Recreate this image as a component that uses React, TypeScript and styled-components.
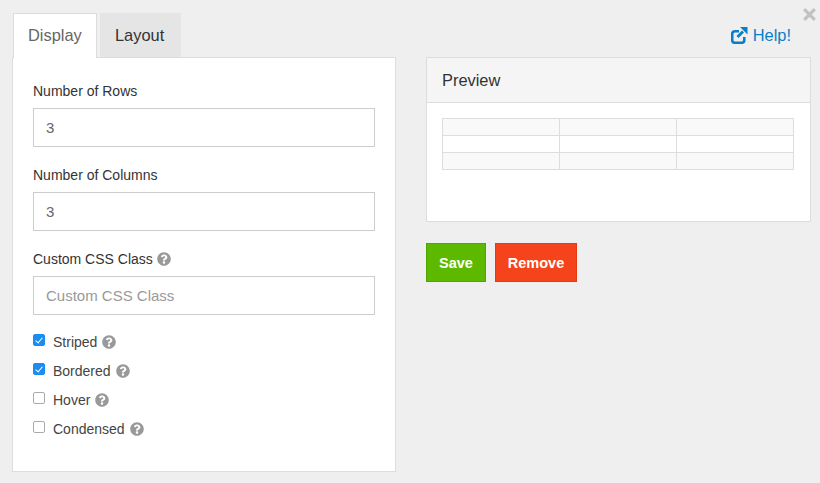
import * as React from 'react';
import styled, {createGlobalStyle} from 'styled-components';
import {FaQuestionCircle} from 'react-icons/fa';

const GlobalStyle = createGlobalStyle`
    html, body {
        margin: 0;
        background: #efefef;
    }

    body {
        font-family: "Liberation Sans", Arial, sans-serif;
        font-size: 14px;
        color: #333;
    }
`;

const Page = styled.div`
    position: relative;
    box-sizing: border-box;
    width: 820px;
    height: 483px;
    padding: 13px 9px 0 12px;
    display: grid;
    grid-template-columns: 384px 385px;
    column-gap: 30px;
    overflow: hidden;
`;

const CloseButton = styled.svg`
    position: absolute;
    top: 8px;
    right: 4px;
    width: 13px;
    height: 13px;
`;

const Tabs = styled.div`
    display: flex;
    gap: 3px;
    margin-left: 1px;
    height: 44px;
`;

const Tab = styled.div<{$active?: boolean}>`
    box-sizing: border-box;
    width: ${p => (p.$active ? '84px' : '81px')};
    height: ${p => (p.$active ? '45px' : '44px')};
    padding-left: ${p => (p.$active ? '14px' : '15px')};
    font-size: 16.4px;
    line-height: ${p => (p.$active ? '43px' : '45px')};
    position: relative;
    z-index: 1;
    color: ${p => (p.$active ? '#666' : '#333')};
    background: ${p => (p.$active ? '#fff' : '#e5e5e5')};
    border: ${p => (p.$active ? '1px solid #ddd' : 'none')};
    border-bottom: none;
`;

const FormPanel = styled.div`
    box-sizing: border-box;
    height: 415px;
    padding: 24px 20px 0;
    background: #fff;
    border: 1px solid #ddd;
`;

const Field = styled.div`
    margin-bottom: 19px;
`;

const FieldLabel = styled.div`
    display: flex;
    align-items: center;
    gap: 4px;
    height: 18px;
    margin-bottom: 8px;
    line-height: 18px;
`;

const TextInput = styled.input`
    display: block;
    box-sizing: border-box;
    width: 342px;
    height: 39px;
    padding: 0 12px;
    border: 1px solid #ccc;
    border-radius: 0;
    background: #fff;
    color: #666;
    font-family: inherit;
    font-size: 15px;
    outline: none;

    &::placeholder {
        color: #999;
        opacity: 1;
    }
`;

const Hint = styled(FaQuestionCircle)`
    color: #999;
    font-size: 14px;
    flex: none;
`;

const CheckList = styled.div`
    display: grid;
    grid-auto-rows: 29px;
    margin-top: -7px;
`;

const CheckRow = styled.label`
    display: flex;
    align-items: center;
    gap: 5px;
    color: #444;
`;

const CheckBox = styled.input`
    appearance: none;
    position: relative;
    box-sizing: border-box;
    width: 12px;
    height: 12px;
    margin: -4px 3px 0 0;
    border: 1px solid #aaa;
    border-radius: 2px;
    background: #fff;

    &:checked {
        border-color: #1b8cf2;
        background: #1b8cf2;
    }

    &:checked::after {
        content: "";
        position: absolute;
        left: 3px;
        top: 1px;
        width: 3px;
        height: 6px;
        border: solid #fff;
        border-width: 0 1.5px 1.5px 0;
        transform: rotate(40deg);
    }
`;

const HelpBar = styled.div`
    display: flex;
    justify-content: flex-end;
    align-items: center;
    gap: 5px;
    height: 44px;
    padding-right: 20px;
    color: #0a7fc9;
    font-size: 16.4px;
`;

const HelpIcon = styled.svg`
    width: 17px;
    height: 18px;
    margin-top: -1px;
`;

const PreviewPanel = styled.div`
    box-sizing: border-box;
    height: 165px;
    background: #fff;
    border: 1px solid #ddd;
`;

const PreviewHeading = styled.div`
    box-sizing: border-box;
    height: 45px;
    padding-left: 15px;
    background: #f5f5f5;
    border-bottom: 1px solid #ddd;
    font-size: 16.4px;
    line-height: 45px;
`;

const PreviewBody = styled.div`
    padding: 15px 15px 0;
`;

const PreviewTable = styled.table`
    width: 352px;
    border-collapse: collapse;
    table-layout: fixed;
`;

const PreviewCell = styled.td<{$striped?: boolean}>`
    height: 16px;
    padding: 0;
    border: 1px solid #ddd;
    background: ${p => (p.$striped ? '#f9f9f9' : '#fff')};
`;

const Actions = styled.div`
    display: flex;
    gap: 9px;
    margin-top: 21px;
`;

const ActionButton = styled.button<{$color: string; $border: string; $width: number}>`
    box-sizing: border-box;
    width: ${p => p.$width}px;
    height: 39px;
    padding: 0;
    border: 1px solid ${p => p.$border};
    border-radius: 0;
    background: ${p => p.$color};
    color: #fff;
    font-family: inherit;
    font-size: 14.5px;
    font-weight: 700;
`;

const checks = [
    {label: 'Striped', checked: true},
    {label: 'Bordered', checked: true},
    {label: 'Hover', checked: false},
    {label: 'Condensed', checked: false},
];

const App = () => (
    <Page>
        <GlobalStyle />
        <CloseButton viewBox="0 0 13 13">
            <path d="M1.2 1.2 L11.8 11.8 M11.8 1.2 L1.2 11.8" stroke="#c2c2c2" strokeWidth="3.2" fill="none" />
        </CloseButton>

        <div>
            <Tabs>
                <Tab $active>Display</Tab>
                <Tab>Layout</Tab>
            </Tabs>
            <FormPanel>
                <Field>
                    <FieldLabel>Number of Rows</FieldLabel>
                    <TextInput defaultValue="3" />
                </Field>
                <Field>
                    <FieldLabel>Number of Columns</FieldLabel>
                    <TextInput defaultValue="3" />
                </Field>
                <Field>
                    <FieldLabel>Custom CSS Class <Hint /></FieldLabel>
                    <TextInput placeholder="Custom CSS Class" />
                </Field>
                <CheckList>
                    {checks.map(check => (
                        <CheckRow key={check.label}>
                            <CheckBox type="checkbox" defaultChecked={check.checked} />
                            {check.label}
                            <Hint />
                        </CheckRow>
                    ))}
                </CheckList>
            </FormPanel>
        </div>

        <div>
            <HelpBar>
                <HelpIcon viewBox="0 0 17 18">
                    <path
                        d="M8 5.2 H4 A2.8 2.8 0 0 0 1.2 8 V14 A2.8 2.8 0 0 0 4 16.8 H10.5 A2.8 2.8 0 0 0 13.3 14 V11"
                        stroke="currentColor"
                        strokeWidth="2.6"
                        fill="none"
                    />
                    <path d="M6.5 11 L12 5.5" stroke="currentColor" strokeWidth="2.8" fill="none" />
                    <path d="M9 1 H16.5 V8.5 Z" fill="currentColor" />
                </HelpIcon>
                Help!
            </HelpBar>
            <PreviewPanel>
                <PreviewHeading>Preview</PreviewHeading>
                <PreviewBody>
                    <PreviewTable>
                        <tbody>
                            {[true, false, true].map((striped, row) => (
                                <tr key={row}>
                                    {[0, 1, 2].map(col => <PreviewCell key={col} $striped={striped} />)}
                                </tr>
                            ))}
                        </tbody>
                    </PreviewTable>
                </PreviewBody>
            </PreviewPanel>
            <Actions>
                <ActionButton $color="#5cb900" $border="#4fa800" $width={60}>Save</ActionButton>
                <ActionButton $color="#f5441b" $border="#e33a12" $width={82}>Remove</ActionButton>
            </Actions>
        </div>
    </Page>
);

export default App;
